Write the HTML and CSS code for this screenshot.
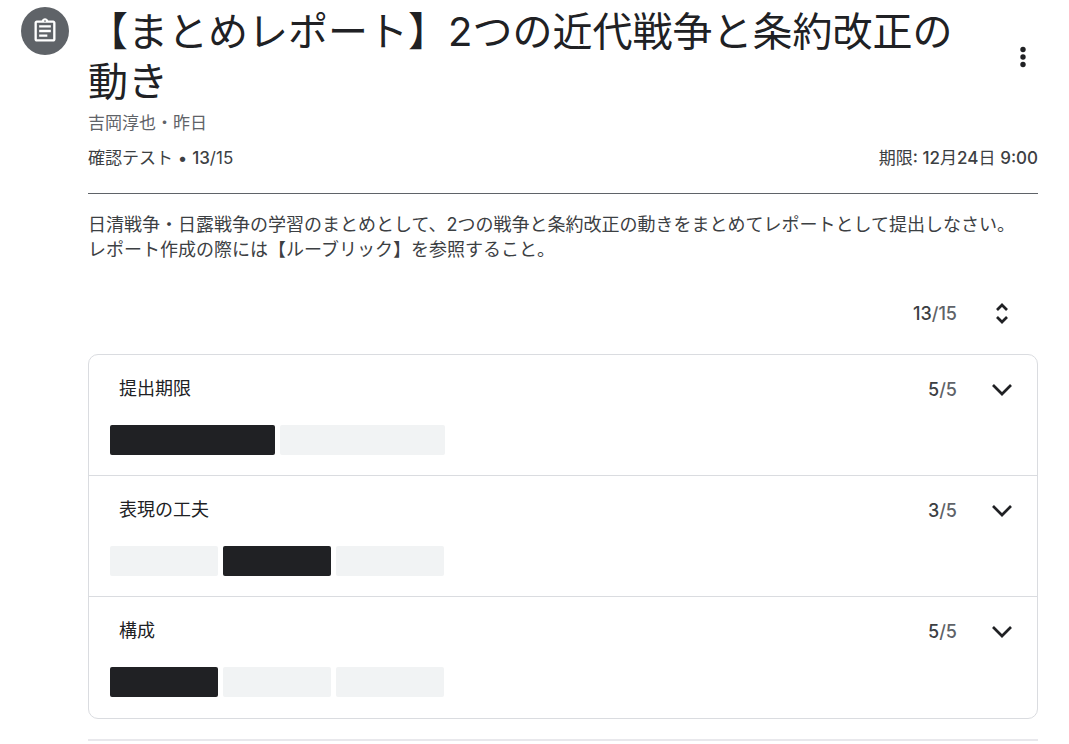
FILE: index.html
```html
<!DOCTYPE html>
<html lang="ja">
<head>
    <meta charset="UTF-8">
    <meta name="viewport" content="width=device-width, initial-scale=1.0">
    <link rel="stylesheet" href="styles.css">
    <title>【まとめレポート】2つの近代戦争と条約改正の動き</title>
</head>
<body>

<main class="assignment">
    <div class="icon-badge">
        <svg viewBox="0 0 24 24" width="28" height="28" aria-hidden="true">
            <path d="M7 15h7v2H7zm0-4h10v2H7zm0-4h10v2H7z"/>
            <path d="M19 3h-4.180C14.400 1.840 13.300 1 12 1s-2.400.840-2.820 2H5c-1.100 0-2 .900-2 2v14c0 1.100.900 2 2 2h14c1.100 0 2-.900 2-2V5c0-1.100-.900-2-2-2zm-7-.250c.410 0 .750.340.750.750s-.340.750-.750.750-.750-.340-.750-.750.340-.750.750-.750zM19 19H5V5h14v14z"/>
        </svg>
    </div>

    <div class="content">
        <header class="heading">
            <h1>【まとめレポート】2つの近代戦争と条約改正の動き</h1>
            <button class="icon-button" type="button" aria-label="その他">
                <svg viewBox="0 0 24 24" width="24" height="24"><circle cx="12" cy="4.500" r="2.700"/><circle cx="12" cy="12" r="2.700"/><circle cx="12" cy="19.500" r="2.700"/></svg>
            </button>
        </header>
        <p class="author">吉岡淳也・昨日</p>
        <div class="meta">
            <span>確認テスト • <b>13</b>/15</span>
            <span>期限<b>: 12</b>月<b>24</b>日 <b>9:00</b></span>
        </div>

        <p class="description">日清戦争・日露戦争の学習のまとめとして、2つの戦争と条約改正の動きをまとめてレポートとして提出しなさい。<br>レポート作成の際には【ルーブリック】を参照すること。</p>

        <div class="total">
            <span class="score"><b>13</b>/15</span>
            <button class="icon-button" type="button" aria-label="すべて展開">
                <svg viewBox="0 0 24 24" width="24" height="24"><path class="line" d="M7 9l5-5 5 5M7 16l5 5 5-5"/></svg>
            </button>
        </div>

        <section class="rubric">
            <div class="criterion">
                <div class="criterion-head">
                    <h2>提出期限</h2>
                    <span class="score"><b>5</b>/5</span>
                    <button class="icon-button" type="button" aria-label="提出期限を展開">
                        <svg viewBox="0 0 24 24" width="24" height="24"><path class="line" d="M3 8l9 9 9-9"/></svg>
                    </button>
                </div>
                <div class="levels two">
                    <span class="level selected"></span>
                    <span class="level"></span>
                </div>
            </div>
            <div class="criterion">
                <div class="criterion-head">
                    <h2>表現の工夫</h2>
                    <span class="score"><b>3</b>/5</span>
                    <button class="icon-button" type="button" aria-label="表現の工夫を展開">
                        <svg viewBox="0 0 24 24" width="24" height="24"><path class="line" d="M3 8l9 9 9-9"/></svg>
                    </button>
                </div>
                <div class="levels">
                    <span class="level"></span>
                    <span class="level selected"></span>
                    <span class="level"></span>
                </div>
            </div>
            <div class="criterion">
                <div class="criterion-head">
                    <h2>構成</h2>
                    <span class="score"><b>5</b>/5</span>
                    <button class="icon-button" type="button" aria-label="構成を展開">
                        <svg viewBox="0 0 24 24" width="24" height="24"><path class="line" d="M3 8l9 9 9-9"/></svg>
                    </button>
                </div>
                <div class="levels">
                    <span class="level selected"></span>
                    <span class="level"></span>
                    <span class="level"></span>
                </div>
            </div>
        </section>
        <hr class="end">
    </div>
</main>

</body>
</html>
```

FILE: styles.css
```css
body {
    font-family: "Inter", "Noto Sans CJK JP", sans-serif;
    font-size: 17px;
    color: #3c4043;
    background-color: #fff;
    margin: 0;
}

h1, h2, p {
    margin: 0;
    font-weight: 400;
}

b {
    font-weight: 500;
}

.assignment {
    display: flex;
    gap: 19px;
    padding: 7px 31px 0 21px;
}

.icon-badge {
    display: flex;
    align-items: center;
    justify-content: center;
    flex: none;
    width: 48px;
    height: 48px;
    border-radius: 50%;
    background-color: #5f6368;
    fill: #fff;
}

.content {
    flex: 1;
    min-width: 0;
}

.heading {
    display: flex;
    align-items: center;
    justify-content: space-between;
    gap: 32px;
}

h1 {
    font-size: 40px;
    line-height: 50px;
    color: #202124;
}

.icon-button {
    display: flex;
    align-items: center;
    justify-content: center;
    flex: none;
    width: 30px;
    height: 40px;
    padding: 0;
    border: none;
    background: none;
    fill: #202124;
    cursor: pointer;
}

.line {
    fill: none;
    stroke: #202124;
    stroke-width: 2.7px;
}

.author {
    line-height: 32px;
    color: #5f6368;
}

.meta {
    display: flex;
    justify-content: space-between;
    line-height: 38px;
    padding-bottom: 16px;
    border-bottom: 1px solid #5f6368;
}

.description {
    font-size: 18px;
    line-height: 25px;
    padding-top: 18px;
}

.total {
    display: flex;
    align-items: center;
    justify-content: flex-end;
    gap: 30px;
    padding: 31px 21px 21px;
}

.score {
    font-size: 18px;
    font-weight: 500;
    color: #5f6368;
}

.score b {
    color: #3c4043;
}

.rubric {
    border: 1px solid #dadce0;
    border-radius: 10px;
}

.criterion {
    padding: 14px 20px 20px 21px;
}

.criterion + .criterion {
    border-top: 1px solid #dadce0;
}

.criterion:last-child {
    padding-bottom: 21px;
}

.criterion-head {
    display: flex;
    align-items: center;
    gap: 30px;
    padding-bottom: 16px;
}

h2 {
    flex: 1;
    padding: 0 0 4px 9px;
    font-size: 18px;
    color: #202124;
}

.levels {
    display: grid;
    grid-template-columns: repeat(3, 108px);
    gap: 5px;
}

.levels.two {
    grid-template-columns: repeat(2, 165px);
}

.level {
    height: 30px;
    border-radius: 2px;
    background-color: #f1f3f4;
}

.level.selected {
    background-color: #202124;
}

.end {
    margin: 20px 0 0;
    border: none;
    border-top: 2px solid #e8e8ec;
}
```
